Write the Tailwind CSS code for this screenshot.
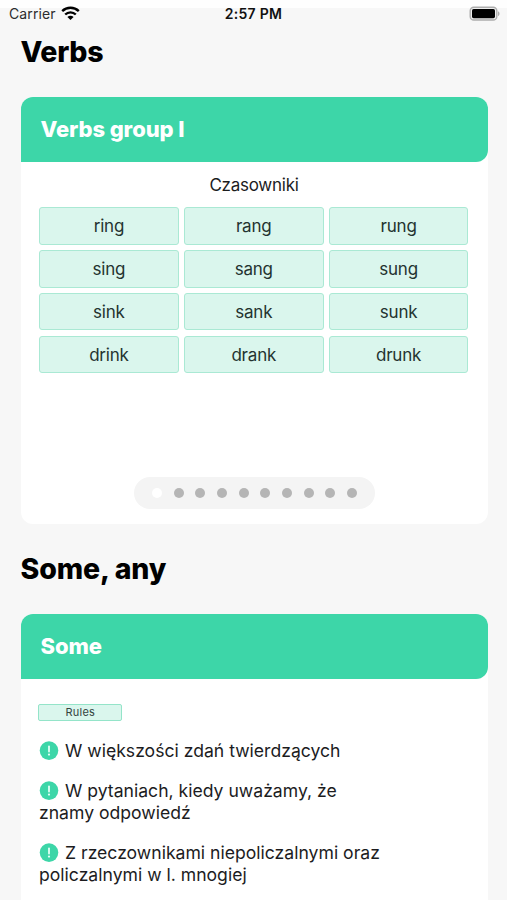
<!DOCTYPE html>
<html lang="pl">
<head>
<meta charset="utf-8">
<meta name="viewport" content="width=device-width, initial-scale=1">
<title>Verbs</title>
<script src="https://cdn.jsdelivr.net/npm/@tailwindcss/browser@4"></script>
</head>
<body class="h-[900px] overflow-hidden bg-[#f7f7f7] font-['Inter','Noto_Sans',sans-serif] text-[#1c1c1e]">
<header class="grid h-7 grid-cols-3 items-center border-t-8 border-[#fefefe] pr-[7px] pl-[9px]">
  <div class="-mt-2 flex items-center gap-[5px] text-[14px] leading-5 tracking-[0.1px] text-[#2c2c2e]"><span>Carrier</span>
    <svg class="-mt-[2px] h-[15px] w-[19px] text-black" viewBox="0 0 19 15" fill="none" stroke="currentColor" stroke-width="2.4"><path d="M1.2 5.1C5.8.6 13.2.6 17.8 5.1M4.2 8.5c3-2.9 7.6-2.9 10.6 0"/><path d="M9.5 13.9 6.4 10.9c1.8-1.5 4.4-1.5 6.2 0Z" fill="currentColor" stroke="none"/></svg>
  </div>
  <div class="-mt-2 -ml-[2px] text-center text-[14px] leading-5 font-semibold tracking-[0.3px] text-[#111]">2:57 PM</div>
  <div class="-mt-[10px] flex justify-end">
    <svg class="h-[15px] w-[31px]" viewBox="0 0 31 15"><rect x="1.2" y="1.2" width="26.6" height="12.8" rx="3.6" fill="#eee" stroke="#adadad" stroke-width="1.4"/><rect x="3" y="3" width="23" height="9.2" rx="1.6" fill="#000"/><path d="M29 5.2c2 .8 2 4 0 4.8Z" fill="#adadad"/></svg>
  </div>
</header>
<main class="h-[872px] overflow-hidden pr-[19.5px] pl-[20.5px]">
  <h1 class="mt-[6px] text-[28.5px] leading-9 font-extrabold tracking-[-0.25px] text-black">Verbs</h1>
  <section class="mt-[27px] h-[427px] rounded-xl bg-white">
    <h2 class="flex h-[65px] items-center rounded-t-xl rounded-br-xl bg-[#3dd6a8] pl-5 text-[22px] font-extrabold tracking-[-0.1px] text-white">Verbs group I</h2>
    <p class="mt-3 text-center text-[17px] leading-[22px] tracking-[-0.25px]">Czasowniki</p>
    <div class="mt-[11.4px] grid grid-cols-3 gap-x-[5px] gap-y-[5.4px] pr-[19px] pl-[18.5px] text-center text-[17px] leading-[36px] tracking-[-0.2px] text-[#243330] *:h-[37.4px] *:rounded-[3px] *:border *:border-[#aae9d4] *:bg-[#daf6ed]">
      <div>ring</div><div>rang</div><div>rung</div>
      <div>sing</div><div>sang</div><div>sung</div>
      <div>sink</div><div>sank</div><div>sunk</div>
      <div>drink</div><div>drank</div><div>drunk</div>
    </div>
    <div class="mx-auto mt-[103.8px] flex h-8 w-[241px] items-center justify-center gap-[11.7px] rounded-full bg-[#f4f4f4] pl-px *:size-[10px] *:rounded-full">
      <i class="bg-white"></i><i class="bg-[#b5b5b5]"></i><i class="bg-[#b5b5b5]"></i><i class="bg-[#b5b5b5]"></i><i class="bg-[#b5b5b5]"></i><i class="bg-[#b5b5b5]"></i><i class="bg-[#b5b5b5]"></i><i class="bg-[#b5b5b5]"></i><i class="bg-[#b5b5b5]"></i><i class="bg-[#b5b5b5]"></i>
    </div>
  </section>
  <h1 class="mt-[27px] text-[28.5px] leading-9 font-extrabold tracking-[-0.15px] text-black">Some, any</h1>
  <section class="mt-[26.5px] h-[427px] rounded-xl bg-white">
    <h2 class="flex h-[65.5px] items-center rounded-t-xl rounded-br-xl bg-[#3dd6a8] pt-px pl-5 text-[22px] font-extrabold tracking-[-0.1px] text-white">Some</h2>
    <div class="pl-[18.5px] text-[17.6px] leading-[22px]">
      <div class="mt-[25px] -ml-[0.7px] h-[17px] w-[84px] rounded-[2px] border border-[#94e4c9] bg-[#daf6ed] text-center text-[11px] leading-[15px] tracking-[0.25px] text-[#34443f]">Rules</div>
      <p class="mt-[19px]"><svg class="mr-[6px] inline size-5 align-[-4px]" viewBox="0 0 20 20"><circle cx="10" cy="9.6" r="9.3" fill="#3dd6a8"/><path d="M10 5.3v5.2" stroke="#e4fff6" stroke-width="1.8" stroke-linecap="round"/><circle cx="10" cy="13.6" r="1.1" fill="#e4fff6"/></svg>W większości zdań twierdzących</p>
      <p class="mt-[18px]"><svg class="mr-[6px] inline size-5 align-[-4px]" viewBox="0 0 20 20"><circle cx="10" cy="9.6" r="9.3" fill="#3dd6a8"/><path d="M10 5.3v5.2" stroke="#e4fff6" stroke-width="1.8" stroke-linecap="round"/><circle cx="10" cy="13.6" r="1.1" fill="#e4fff6"/></svg>W pytaniach, kiedy uważamy, że<br>znamy odpowiedź</p>
      <p class="mt-[18px]"><svg class="mr-[6px] inline size-5 align-[-4px]" viewBox="0 0 20 20"><circle cx="10" cy="9.6" r="9.3" fill="#3dd6a8"/><path d="M10 5.3v5.2" stroke="#e4fff6" stroke-width="1.8" stroke-linecap="round"/><circle cx="10" cy="13.6" r="1.1" fill="#e4fff6"/></svg>Z rzeczownikami niepoliczalnymi oraz<br>policzalnymi w l. mnogiej</p>
    </div>
  </section>
</main>
</body>
</html>
